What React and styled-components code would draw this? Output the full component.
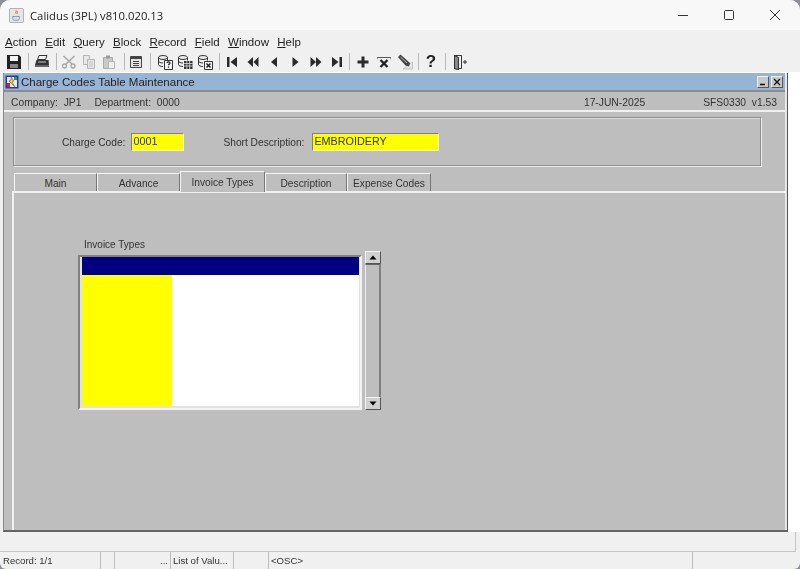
import React from "react";
import styled, { createGlobalStyle } from "styled-components";

const GlobalStyle = createGlobalStyle`
  html, body { margin: 0; padding: 0; background: #8c8f94; }
  #root { width: 800px; height: 569px; }
`;

// toolbar data: [icon, button width] or separator margins
const toolbar = [
  ["save"], { l: 4, r: 3 }, ["print"], { l: 4, r: 2 }, ["cut"], ["copy"], ["paste"], { l: 5, r: 1 },
  ["list"], { l: 4, r: 4 }, ["query"], ["execute"], ["cancel"], { l: 4, r: 1 },
  ["first", 21], ["prevSet", 21], ["prev", 21], ["next", 21], ["nextSet", 21], ["last", 21], { l: 2, r: 2 },
  ["plus", 21], ["remove", 22], ["clear"], { l: 3, r: 2 }, ["help"], { l: 4, r: 4 }, ["exit"],
];
const menus = ["Action", "Edit", "Query", "Block", "Record", "Field", "Window", "Help"];
const tabs = [
  { label: "Main", width: 83 },
  { label: "Advance", width: 83 },
  { label: "Invoice Types", width: 85, active: true },
  { label: "Description", width: 82 },
  { label: "Expense Codes", width: 84 },
];
const statusCells = [
  { text: "Record: 1/1", width: 100 },
  { text: "", width: 14 },
  { text: "...", width: 56, right: true },
  { text: "List of Valu...", width: 63 },
  { text: "", width: 35 },
  { text: "<OSC>", width: 424 },
  { text: "", width: 107, last: true },
];

const Db = ({ children }) => (
  <>
    <ellipse cx="6" cy="3.5" rx="4.5" ry="2" fill="#eee" stroke="#333" />
    <path d="M1.5 3.5v7c0 1.2 2 2 4.5 2M10.5 3.5v3M1.5 7c0 1.1 2 2 4.5 2" fill="none" stroke="#333" />
    {children}
  </>
);

const icons = {
  save: (
    <>
      <path d="M1 1h12l2 2v12H1z" fill="#222" />
      <rect x="4" y="2" width="8" height="5" fill="#f4f4f4" />
      <rect x="4" y="10" width="8" height="4" fill="#888" />
    </>
  ),
  print: (
    <>
      <path d="M5 1.5h8l-1.5 4h-8z" fill="#f2f2f2" stroke="#333" />
      <path d="M2.5 6h12l.5 5H1z" fill="#333" />
      <path d="M1 11h14v2H1z" fill="#666" />
      <path d="M4 8h8" stroke="#ccc" />
    </>
  ),
  cut: (
    <>
      <path d="M13.5 2L5 10M2.5 2l8.5 8" stroke="#a6a6a6" strokeWidth="1.5" fill="none" />
      <circle cx="3.5" cy="12" r="2" fill="none" stroke="#a6a6a6" strokeWidth="1.3" />
      <circle cx="12" cy="12" r="2" fill="none" stroke="#a6a6a6" strokeWidth="1.3" />
    </>
  ),
  copy: (
    <>
      <path d="M2.5 1.5h6v9h-6z" fill="#e8e8e8" stroke="#b5b5b5" />
      <path d="M6.5 5.5h7v9h-7z" fill="#e8e8e8" stroke="#b5b5b5" />
      <path d="M8 8h4M8 10h4M8 12h4" stroke="#c4c4c4" />
    </>
  ),
  paste: (
    <>
      <path d="M2.5 3.5h9v11h-9z" fill="#c9c9c9" stroke="#aaa" />
      <rect x="5" y="1.5" width="4" height="3" fill="#999" />
      <path d="M7.5 7.5h6v7h-6z" fill="#efefef" stroke="#b5b5b5" />
    </>
  ),
  list: (
    <>
      <path d="M2.5 2.5h11v11h-11z" fill="#e4e4e4" stroke="#444" />
      <path d="M2 3h12v2H2z" fill="#444" />
      <path d="M5 7.5h6M5 9.5h6M5 11.5h6" stroke="#444" />
    </>
  ),
  query: (
    <Db>
      <path d="M7.5 6.5h8v9h-8z" fill="#f4f4f4" stroke="#333" />
      <path d="M10 9c0-1.5 3-1.5 3 0 0 1-1.5 1-1.5 2.2M11.5 12.5v1.3" fill="none" stroke="#222" strokeWidth="1.2" />
    </Db>
  ),
  execute: (
    <Db>
      <path d="M7 7h8.5v8H7z" fill="#333" />
      <path d="M7 9.5h8.5M7 12h8.5M9.8 7v8M12.6 7v8" stroke="#ddd" strokeWidth="0.8" />
    </Db>
  ),
  cancel: (
    <Db>
      <path d="M7.5 7.5h8v8h-8z" fill="#f4f4f4" stroke="#333" />
      <path d="M9.5 9.5l4 4M13.5 9.5l-4 4" stroke="#222" strokeWidth="1.5" />
    </Db>
  ),
  first: <path d="M3 3h2.5v10H3zM13 3v10L6.5 8z" fill="#2a2a2a" />,
  prevSet: <path d="M8 3v10L2.5 8zM13.5 3v10L8.5 8z" fill="#2a2a2a" />,
  prev: <path d="M11 3v10L5 8z" fill="#2a2a2a" />,
  next: <path d="M5.5 3v10l6-5z" fill="#2a2a2a" />,
  nextSet: <path d="M2.5 3v10L8 8zM8 3v10l5.5-5z" fill="#2a2a2a" />,
  last: <path d="M3 3v10l6.5-5zM10.5 3H13v10h-2.5z" fill="#2a2a2a" />,
  plus: <path d="M6.5 2.5h3v4h4v3h-4v4h-3v-4h-4v-3h4z" fill="#2a2a2a" />,
  remove: (
    <>
      <path d="M1 3.5h14" stroke="#555" fill="none" />
      <path d="M1.5 3.5v2M14.5 3.5v2" stroke="#999" fill="none" />
      <path d="M4.5 6l7 7M11.5 6l-7 7" stroke="#222" strokeWidth="2.4" />
    </>
  ),
  clear: (
    <>
      <path d="M6 15h9.5V8z" fill="#e4e4e4" stroke="#aaa" strokeWidth="0.6" />
      <path d="M1 3l2.5-2.5 9.5 8.5-1 3.5-3.5-1z" fill="#444" />
      <path d="M3.5 3l6.5 6" stroke="#bbb" />
    </>
  ),
  exit: (
    <>
      <path d="M2.5 1.5h7v13h-7z" fill="#eee" stroke="#333" />
      <path d="M2.5 1.5l4 2v12.5l-4-1.5z" fill="#888" stroke="#333" />
      <path d="M11 8h4M13 6v4" stroke="#333" />
    </>
  ),
};

const App = () => {
  return (
    <Page>
      <GlobalStyle />
      <TitleBar>
        <AppIcon viewBox="0 0 16 16">
          <rect x="0.5" y="0.5" width="15" height="15" rx="1.5" fill="#e6e6e6" stroke="#aab" />
          <path d="M4 9h7v2.5c0 1-1 1.5-2 1.5H6c-1 0-2-.5-2-1.5z" fill="#e0e4f0" stroke="#5a6a9a" strokeWidth="0.7" />
          <path d="M7.5 2.5c1 1.5-1.2 2 0 3.5M9 3.5c.6 1-.8 1.5 0 2.5" stroke="#d9541e" fill="none" />
        </AppIcon>
        <AppTitle>Calidus (3PL) v810.020.13</AppTitle>
        <WindowControls>
          <WindowButton>
            <svg width="12" height="12" viewBox="0 0 12 12">
              <path d="M1 6.5h10" stroke="#333" />
            </svg>
          </WindowButton>
          <WindowButton>
            <svg width="12" height="12" viewBox="0 0 12 12">
              <rect x="1.5" y="1.5" width="9" height="9" rx="1" fill="none" stroke="#333" />
            </svg>
          </WindowButton>
          <WindowButton>
            <svg width="12" height="12" viewBox="0 0 12 12">
              <path d="M1 1l10 10M11 1L1 11" stroke="#333" />
            </svg>
          </WindowButton>
        </WindowControls>
      </TitleBar>

      <MenuBar>
        {menus.map((m) => (
          <MenuItem key={m}>
            <u>{m[0]}</u>
            {m.slice(1)}
          </MenuItem>
        ))}
      </MenuBar>

      <Toolbar>
        {toolbar.map((item, i) =>
          Array.isArray(item) ? (
            <ToolButton key={i} $width={item[1]}>
              {item[0] === "help" ? (
                <HelpMark>?</HelpMark>
              ) : (
                <svg width="16" height="16" viewBox="0 0 16 16">
                  {icons[item[0]]}
                </svg>
              )}
            </ToolButton>
          ) : (
            <ToolSep key={i} $l={item.l} $r={item.r} />
          )
        )}
      </Toolbar>

      <Desktop>
        <InnerWindow>
          <InnerTitle>
            <FormIcon viewBox="0 0 14 14">
              <rect x="0.5" y="0.5" width="13" height="13" fill="#2a3a9c" />
              <rect x="2" y="2" width="10" height="10" fill="#e8e8f4" />
              <path d="M6 2l3 4-2 1 3 5-6-6 2-1z" fill="#f2d20a" stroke="#222" strokeWidth="0.4" />
              <rect x="2" y="8" width="3" height="4" fill="#d3213a" />
              <rect x="9" y="2" width="3" height="3" fill="#2a9c4a" />
            </FormIcon>
            <InnerTitleText>Charge Codes Table Maintenance</InnerTitleText>
            <InnerButton>
              <svg width="8" height="8" viewBox="0 0 8 8">
                <path d="M1 6.5h5" stroke="#111" strokeWidth="1.6" />
              </svg>
            </InnerButton>
            <InnerButton>
              <svg width="8" height="8" viewBox="0 0 8 8">
                <path d="M1 1l6 6M7 1L1 7" stroke="#111" strokeWidth="1.3" />
              </svg>
            </InnerButton>
          </InnerTitle>

          <InfoRow>
            <InfoText>Company:&nbsp; JP1</InfoText>
            <InfoText $gap={13}>Department:&nbsp; 0000</InfoText>
            <InfoDate>17-JUN-2025</InfoDate>
            <InfoText>SFS0330&nbsp; v1.53</InfoText>
          </InfoRow>

          <FormPane>
            <HeaderPanel>
              <FieldLabel $left={47} $right={6}>Charge Code:</FieldLabel>
              <YellowInput $width={53}>0001</YellowInput>
              <FieldLabel $left={39} $right={8}>Short Description:</FieldLabel>
              <YellowInput $width={127}>EMBROIDERY</YellowInput>
            </HeaderPanel>

            <TabStrip>
              {tabs.map((t) => (
                <Tab key={t.label} $width={t.width} $active={t.active}>
                  {t.label}
                </Tab>
              ))}
            </TabStrip>

            <TabPanel>
              <TableBlock>
                <TableColumn>
                  <TableLabel>Invoice Types</TableLabel>
                  <TableFrame>
                    <TableHead />
                    <TableBody>
                      <CodeColumn />
                      <NameColumn />
                    </TableBody>
                  </TableFrame>
                </TableColumn>
                <Scrollbar>
                  <ScrollButton>
                    <svg width="8" height="5" viewBox="0 0 8 5">
                      <path d="M4 0.5L7.5 4.5H0.5z" fill="#000" />
                    </svg>
                  </ScrollButton>
                  <ScrollTrack />
                  <ScrollButton>
                    <svg width="8" height="5" viewBox="0 0 8 5">
                      <path d="M4 4.5L7.5 0.5H0.5z" fill="#000" />
                    </svg>
                  </ScrollButton>
                </Scrollbar>
              </TableBlock>
            </TabPanel>
          </FormPane>
        </InnerWindow>
      </Desktop>

      <HintBar />

      <StatusBar>
        {statusCells.map((c, i) => (
          <StatusCell key={i} $width={c.width} $right={c.right} $last={c.last}>
            {c.text}
          </StatusCell>
        ))}
      </StatusBar>
    </Page>
  );
};

const Page = styled.div`
  width: 800px;
  height: 569px;
  display: flex;
  flex-direction: column;
  overflow: hidden;
  border-radius: 10px 10px 6px 6px;
  background: #f0f0f0;
  font-family: "Liberation Sans", Arial, sans-serif;
  color: #333;
  filter: blur(0.3px);
`;

const TitleBar = styled.div`
  height: 30px;
  flex: none;
  display: flex;
  align-items: center;
  padding-left: 9px;
  background: #f8f8f8;
`;

const AppIcon = styled.svg`
  width: 15px;
  height: 15px;
`;

const AppTitle = styled.span`
  margin-left: 6px;
  font-family: "Open Sans", sans-serif;
  font-size: 11.3px;
  color: #222;
  flex: 1;
`;

const WindowControls = styled.div`
  display: flex;
  padding-right: 2px;
`;

const WindowButton = styled.div`
  width: 46px;
  height: 30px;
  display: flex;
  align-items: center;
  justify-content: center;
`;

const MenuBar = styled.div`
  height: 21px;
  flex: none;
  display: flex;
  align-items: center;
  gap: 8.3px;
  padding: 2px 0 0 5px;
  box-sizing: border-box;
`;

const MenuItem = styled.span`
  font-size: 11.5px;
  color: #222;
`;

const Toolbar = styled.div`
  height: 21px;
  flex: none;
  display: flex;
  align-items: center;
  padding-left: 4px;
`;

const ToolButton = styled.div`
  width: ${(p) => p.$width || 20}px;
  height: 20px;
  display: flex;
  align-items: center;
  justify-content: center;
`;

const HelpMark = styled.span`
  font-size: 17px;
  font-weight: 700;
  color: #222;
`;

const ToolSep = styled.div`
  width: 1px;
  height: 17px;
  background: #b8b8b8;
  margin-left: ${(p) => p.$l}px;
  margin-right: ${(p) => p.$r}px;
`;

const Desktop = styled.div`
  flex: 1;
  min-height: 0;
  display: flex;
  padding: 0 12px 0 3px;
  border-top: 1px solid #fff;
  background: linear-gradient(90deg, #f0f0f0 0 788px, #fff 788px);
`;

const InnerWindow = styled.div`
  flex: 1;
  display: flex;
  flex-direction: column;
  background: #bebebe;
  border-left: 1px solid #8a8a8a;
  border-right: 1px solid #555;
  border-bottom: 2px solid #666;
  padding-right: 2px;
  box-shadow: inset -2px 0 0 #e8e8e8;
`;

const InnerTitle = styled.div`
  height: 19px;
  box-sizing: border-box;
  flex: none;
  display: flex;
  align-items: center;
  gap: 2px;
  padding-right: 2px;
  background: #98b4d4;
  border-bottom: 2px solid #8c8c8c;
`;

const FormIcon = styled.svg`
  width: 14px;
  height: 14px;
  margin-left: 1px;
`;

const InnerTitleText = styled.span`
  flex: 1;
  font-size: 11.5px;
  color: #222;
`;

const InnerButton = styled.div`
  width: 12px;
  height: 12px;
  display: flex;
  align-items: center;
  justify-content: center;
  background: #c8c8c8;
  border: 1px solid;
  border-color: #eee #555 #555 #eee;
  box-sizing: border-box;
`;

const InfoRow = styled.div`
  height: 20px;
  box-sizing: border-box;
  flex: none;
  display: flex;
  align-items: center;
  padding: 3px 8px 0 7px;
  border-bottom: 2px solid #f0f0f0;
`;

const InfoText = styled.span`
  font-size: 10.3px;
  margin-left: ${(p) => p.$gap || 0}px;
`;

const InfoDate = styled.span`
  font-size: 10.3px;
  margin-left: auto;
  margin-right: 58px;
`;

const FormPane = styled.div`
  flex: 1;
  min-height: 0;
  display: flex;
  flex-direction: column;
  padding: 5px 0 0 9px;
`;

const HeaderPanel = styled.div`
  width: 748px;
  height: 49px;
  flex: none;
  display: flex;
  align-items: center;
  box-sizing: border-box;
  border: 1px solid #8f8f8f;
  padding-left: 1px;
  box-shadow: inset 1px 1px 0 #dcdcdc, 1px 1px 0 #ececec;
`;

const FieldLabel = styled.span`
  font-size: 10.2px;
  margin-left: ${(p) => p.$left}px;
  margin-right: ${(p) => p.$right}px;
  padding-top: 1px;
  white-space: nowrap;
`;

const YellowInput = styled.div`
  width: ${(p) => p.$width}px;
  height: 18px;
  box-sizing: border-box;
  padding: 0 1px 1px;
  display: flex;
  align-items: center;
  font-size: 10.8px;
  color: #333;
  background: #ffff00;
  border: 1px solid;
  border-color: #808080 #f4f4f4 #f4f4f4 #808080;
`;

const TabStrip = styled.div`
  height: 20px;
  flex: none;
  display: flex;
  align-items: flex-end;
  margin-top: 5px;
  padding-left: 1px;
`;

const Tab = styled.div`
  width: ${(p) => p.$width}px;
  height: ${(p) => (p.$active ? 21 : 18)}px;
  display: flex;
  align-items: center;
  justify-content: center;
  font-size: 10.2px;
  box-sizing: border-box;
  padding-top: 1px;
  background: #bebebe;
  border-top: 1px solid #f4f4f4;
  border-left: 1px solid #f4f4f4;
  border-right: 1px solid #777;
  position: relative;
  z-index: ${(p) => (p.$active ? 1 : 0)};
  margin-bottom: ${(p) => (p.$active ? "-1px" : 0)};
`;

const TabPanel = styled.div`
  flex: 1;
  min-height: 0;
  border-top: 2px solid #f0f0f0;
  border-left: 2px solid #f0f0f0;
  margin-left: -1px;
  padding: 46px 0 0 64px;
`;

const TableBlock = styled.div`
  display: flex;
  align-items: flex-end;
  gap: 3px;
`;

const TableColumn = styled.div`
  display: flex;
  flex-direction: column;
`;

const TableLabel = styled.div`
  font-size: 10px;
  line-height: 12px;
  padding: 0 0 4px 6px;
`;

const TableFrame = styled.div`
  width: 284px;
  height: 155px;
  box-sizing: border-box;
  display: flex;
  flex-direction: column;
  padding: 0 1px 2px 2px;
  background: #e2e2e2;
  border: 2px solid;
  border-color: #808080 #f4f4f4 #f4f4f4 #808080;
`;

const TableHead = styled.div`
  height: 18px;
  flex: none;
  background: #000080;
`;

const TableBody = styled.div`
  flex: 1;
  display: flex;
`;

const CodeColumn = styled.div`
  width: 90px;
  background: #ffff00;
`;

const NameColumn = styled.div`
  flex: 1;
  background: #fff;
`;

const Scrollbar = styled.div`
  width: 16px;
  height: 159px;
  display: flex;
  flex-direction: column;
`;

const ScrollButton = styled.div`
  height: 13px;
  flex: none;
  box-sizing: border-box;
  display: flex;
  align-items: center;
  justify-content: center;
  background: #d0d0d0;
  border: 1px solid;
  border-color: #f4f4f4 #555 #555 #f4f4f4;
`;

const ScrollTrack = styled.div`
  flex: 1;
  background: #bebebe;
  border-left: 1px solid #eee;
  border-right: 2px solid #808080;
  border-top: 1px solid #666;
`;

const HintBar = styled.div`
  width: 796px;
  height: 20px;
  flex: none;
  box-sizing: border-box;
  border-bottom: 1px solid #c4c4c4;
  border-right: 1px solid #c4c4c4;
  background: #f0f0f0;
`;

const StatusBar = styled.div`
  height: 17px;
  flex: none;
  display: flex;
  padding-left: 1px;
`;

const StatusCell = styled.div`
  width: ${(p) => p.$width}px;
  flex: none;
  box-sizing: border-box;
  padding: 0 2px;
  display: flex;
  align-items: center;
  justify-content: ${(p) => (p.$right ? "flex-end" : "flex-start")};
  font-size: 9.6px;
  color: #333;
  border-right: ${(p) => (p.$last ? "none" : "1px solid #bdbdbd")};
`;

export default App;
